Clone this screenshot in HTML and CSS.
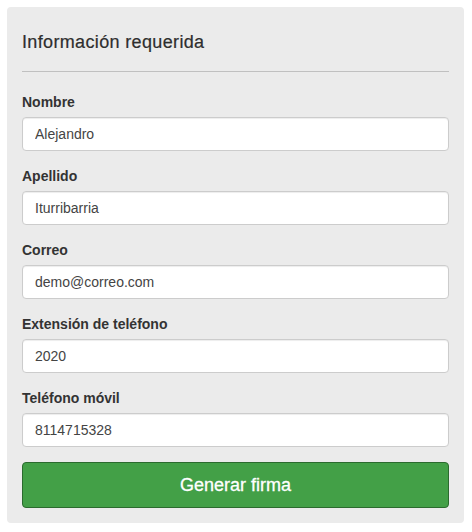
FILE: index.html
```html
<!DOCTYPE html>
<html lang="es">
<head>
<meta charset="utf-8">
<title>Información requerida</title>
<link rel="stylesheet" href="styles.css">
</head>
<body>
<form class="well">
  <h4 class="title">Información requerida</h4>
  <hr class="rule">
  <div class="group">
    <label class="label">Nombre</label>
    <input class="field" type="text" value="Alejandro">
  </div>
  <div class="group">
    <label class="label">Apellido</label>
    <input class="field" type="text" value="Iturribarria">
  </div>
  <div class="group">
    <label class="label">Correo</label>
    <input class="field" type="text" value="demo@correo.com">
  </div>
  <div class="group">
    <label class="label">Extensión de teléfono</label>
    <input class="field" type="text" value="2020">
  </div>
  <div class="group">
    <label class="label">Teléfono móvil</label>
    <input class="field" type="text" value="8114715328">
  </div>
  <button class="btn" type="button">Generar firma</button>
</form>
</body>
</html>
```
FILE: styles.css
```css
* { box-sizing: border-box; }
html, body { margin: 0; background: #fff; }
body {
  padding: 7px 8px 9px 7px;
  font-family: "Liberation Sans", Arial, sans-serif;
  font-size: 14px;
  line-height: 20px;
  color: #333;
}
.well {
  background: #ebebeb;
  border-radius: 4px;
  padding: 15px 15px 15px 15px;
  display: flex;
  flex-direction: column;
}
.title {
  margin: 10px 0 0 0;
  font-size: 18px;
  font-weight: 500;
  line-height: 20px;
  letter-spacing: 0.35px;
  color: #2e2e2e;
  -webkit-text-stroke: 0.2px #2e2e2e;
}
.rule {
  margin: 19px 0 20px 0;
  border: 0;
  border-top: 1px solid #c0c0c0;
  height: 0;
}
.group {
  display: flex;
  flex-direction: column;
  margin-bottom: 15px;
}
.label {
  font-weight: bold;
  margin-bottom: 5px;
  line-height: 20px;
}
.field {
  height: 34px;
  width: 100%;
  padding: 6px 12px;
  border: 1px solid #ccc;
  border-radius: 4px;
  background: #fff;
  font-family: "Liberation Sans", Arial, sans-serif;
  font-size: 14px;
  color: #444;
  box-shadow: inset 0 1px 1px rgba(0,0,0,0.075);
  outline: none;
}
.btn {
  height: 46px;
  width: 100%;
  border: 1px solid #2b6b2e;
  border-radius: 4px;
  background: #43a047;
  color: #fff;
  font-family: "Liberation Sans", Arial, sans-serif;
  font-size: 18px;
  line-height: 24px;
  padding: 10px 16px;
  -webkit-text-stroke: 0.3px #fff;
  cursor: pointer;
}
```
